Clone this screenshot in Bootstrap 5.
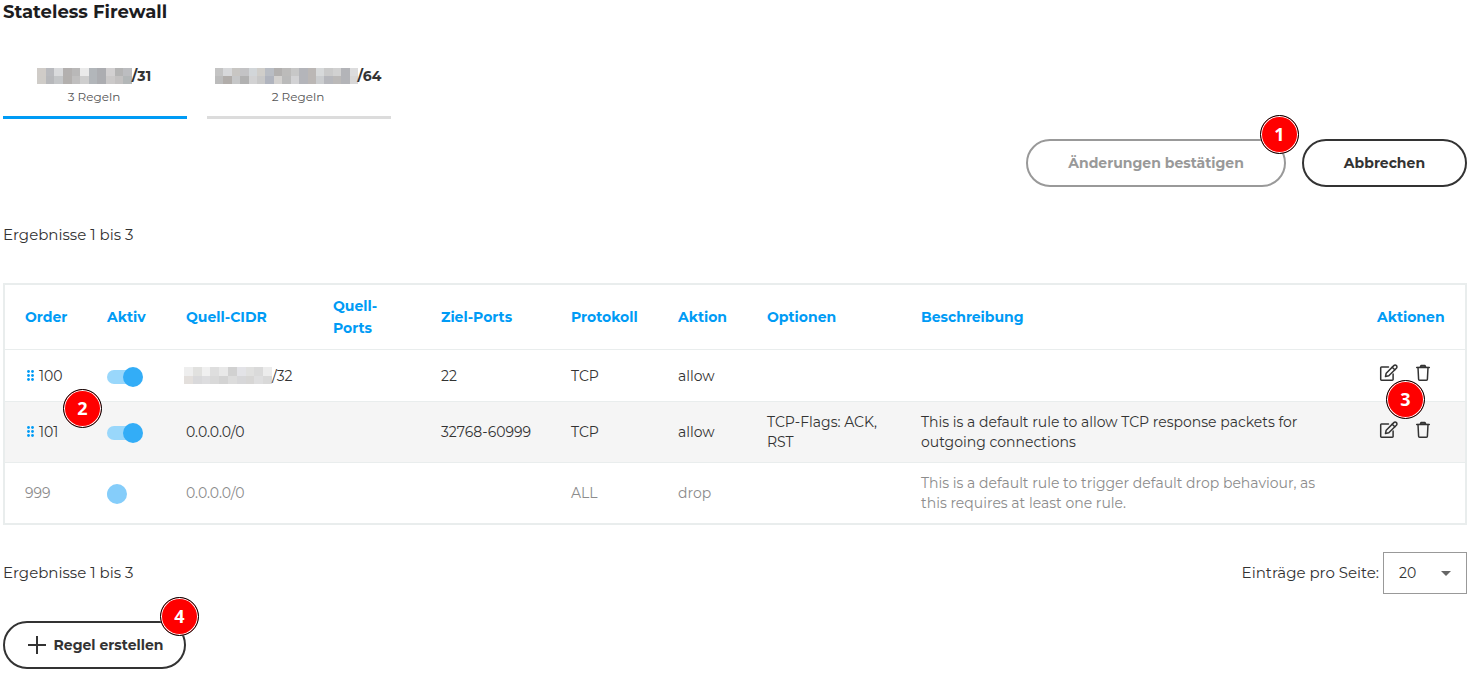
<!DOCTYPE html>
<html lang="de">
<head>
<meta charset="utf-8">
<meta name="viewport" content="width=device-width, initial-scale=1">
<title>Stateless Firewall</title>
<link href="https://cdn.jsdelivr.net/npm/bootstrap@5.3.0/dist/css/bootstrap.min.css" rel="stylesheet">
<style>
  body { font-family: Montserrat, Inter, sans-serif; font-size: 15px; line-height: 20px; color: #333; background: #fff; }
  .page { padding: 0 5px 4px 3px; }
  .page-title { font-size: 18px; line-height: 24px; font-weight: 700; color: #1d1d1f; }
  .nav-networks { gap: 20px; margin-top: 42px; }
  .nav-networks .nav-link { width: 184px; padding: 0 2px 8px 0; border: 0; border-bottom: 3px solid #dcdcdc; border-radius: 0; text-align: center; color: #333; background: none; }
  .nav-networks .nav-link.active { border-color: #009bf5; }
  .net-name { font-size: 14px; font-weight: 700; line-height: 20px; display: flex; justify-content: center; align-items: center; }
  .net-rules { font-size: 12px; line-height: 22px; display: block; color: #555; }
  .top-actions { margin-top: 20px; }
  .btn-pill { height: 48px; border: 2px solid #333; border-radius: 24px; color: #333; background: #fff; font-size: 14px; font-weight: 700; padding: 0 20px; }
  .btn-pill:disabled { border-color: #999; color: #999; background: #fff; opacity: 1; }
  .btn-confirm { width: 260px; }
  .btn-cancel { width: 165px; }
  .btn-create { width: 183px; padding: 0 0 0 2px; }
  .results { margin: 38px 0; }
  .rules { table-layout: fixed; border: 2px solid #e9eded; border-collapse: separate; border-spacing: 0; margin-bottom: 0; font-size: 14px; }
  .rules th, .rules td { padding: 10px 20px; border: 0; border-bottom: 1px solid #e9eded; vertical-align: middle; color: #333; }
  .rules th { height: 65px; line-height: 22px; font-weight: 700; color: #009bf5; }
  .rules td { height: 52px; }
  .rules tr.shaded td { background: #f5f5f5; }
  .rules tr.locked td { color: #8c8c8c; border-bottom: 0; }
  .w-order { width: 82px; } .w-active { width: 79px; } .w-cidr { width: 147px; } .w-sports { width: 108px; }
  .w-dports { width: 130px; } .w-proto { width: 107px; } .w-action { width: 89px; } .w-opts { width: 154px; } .w-tools { width: 108px; }
  .toggle { appearance: none; display: block; position: relative; width: 36px; height: 20px; margin: 2px 0 0; border: 0; background: none; }
  .toggle::before { content: ""; position: absolute; inset: 3px 2px 3px 0; border-radius: 7px; background: #99d7fb; }
  .toggle::after { content: ""; position: absolute; right: 0; top: 0; width: 20px; height: 20px; border-radius: 50%; background: #33adf7; }
  .toggle-off { width: 20px; opacity: 1; }
  .toggle-off::after { background: #85cdfa; }
  .tool { border: 0; background: none; padding: 0; color: #333; display: block; }
  .tool svg, .drag svg { display: block; }
  .tools { gap: 14px; margin: -5px 0 0 2px; }
  .redacted { margin-left: -2px; }
  .table-footer { margin-top: 27px; }
  .per-page { width: 84px; height: 42px; border: 1px solid #999; border-radius: 0; font-size: 14px; color: #333; padding: 0 15px;
    background-image: url("data:image/svg+xml,%3Csvg xmlns='http://www.w3.org/2000/svg' viewBox='0 0 10 5'%3E%3Cpath d='M0 0h10L5 5z' fill='%23666'/%3E%3C/svg%3E"); background-size: 10px 5px; background-position: right 15px center; }
  .create { margin-top: 27px; }
  .pin { position: absolute; width: 39px; height: 39px; border: 1px solid #000; border-radius: 50%; background: #f00; color: #fff;
    box-shadow: inset 0 0 0 1px #fff, 0 0 1px #fff; font: 700 18px/37px "Noto Sans", sans-serif; text-align: center; z-index: 2; pointer-events: none; }
  .pin-corner { top: -24px; right: -13px; }
  .pin-order { left: 60px; top: 106px; }
  .pin-tools { right: 42px; top: 97px; }
</style>
</head>
<body>
<main class="page">
  <h1 class="page-title mb-0">Stateless Firewall</h1>

  <div class="nav nav-networks" role="tablist">
    <button class="nav-link active" type="button" role="tab" aria-selected="true">
      <span class="net-name"><svg data-width="95" data-tiles="d0ccc8 b9babe d9dadc b3b0af b9b8b8 eaeaea b2b6ba acadb1 d2d0d1 b4b4b4 bcbdc0|cfccc8 b7b8bb c4c6c8 b3b0ae c0bfbf cecece b2b6ba acadb1 cbc9c9 c3c1c1 b3b7b8" height="16"></svg>/31</span>
      <span class="net-rules">3 Regeln</span>
    </button>
    <button class="nav-link" type="button" role="tab" aria-selected="false">
      <span class="net-name"><svg data-width="143" data-tiles="c4c4c4 d7d8da c8c6c3 c3c3c5 d2d6d9 d0ceca b9bdc4 b2b0af bcbbba c7c7c7 b4b5ba bbb7b5 d7d9da cacaca d1d1d1 b3b4b8 dcdcdd|bcbcbc b1adaa c6c7c8 b1b1b1 d2d2d3 c8c8c8 b0b4be d3d1cf bababa d2d2d4 b4b5ba bbb7b5 cbcdcf b6b7bc bbb9b8 b3b4b8 d8d7d7" height="16"></svg>/64</span>
      <span class="net-rules">2 Regeln</span>
    </button>
  </div>

  <div class="d-flex justify-content-end gap-3 top-actions">
    <div class="position-relative">
      <button class="btn btn-pill btn-confirm" type="button" disabled>Änderungen bestätigen</button>
      <span class="pin pin-corner">1</span>
    </div>
    <button class="btn btn-pill btn-cancel" type="button">Abbrechen</button>
  </div>

  <p class="results">Ergebnisse 1 bis 3</p>

  <div class="position-relative">
    <table class="table rules">
      <colgroup>
        <col class="w-order"><col class="w-active"><col class="w-cidr"><col class="w-sports"><col class="w-dports">
        <col class="w-proto"><col class="w-action"><col class="w-opts"><col><col class="w-tools">
      </colgroup>
      <thead>
        <tr><th>Order</th><th>Aktiv</th><th>Quell-CIDR</th><th>Quell-Ports</th><th>Ziel-Ports</th><th>Protokoll</th><th>Aktion</th><th>Optionen</th><th>Beschreibung</th><th>Aktionen</th></tr>
      </thead>
      <tbody>
        <tr>
          <td><span class="drag d-flex align-items-center"><svg width="14" height="12"><use href="#grip"/></svg>100</span></td>
          <td><input class="toggle" type="checkbox" role="switch" aria-label="Regel 100 aktiv" checked></td>
          <td><span class="redacted d-flex align-items-center"><svg data-width="88" data-tiles="eeeeee e1e1df f0f0f0 dedede e8e8e8 d1d1d1 e3e3e7 e0e0df dadada ececec|e3dfdc d9d9db dddddf d9d9d9 d3d3d3 dcdcdc d7d7d9 d7d6d5 dededf d9d9d9" height="17"></svg>/32</span></td>
          <td></td><td>22</td><td>TCP</td><td>allow</td><td></td><td></td>
          <td><div class="d-flex tools">
            <button class="tool" type="button" aria-label="Regel 100 bearbeiten"><svg width="20" height="20"><use href="#edit"/></svg></button>
            <button class="tool" type="button" aria-label="Regel 100 löschen"><svg width="20" height="20"><use href="#trash"/></svg></button>
          </div></td>
        </tr>
        <tr class="shaded">
          <td><span class="drag d-flex align-items-center"><svg width="14" height="12"><use href="#grip"/></svg>101</span></td>
          <td><input class="toggle" type="checkbox" role="switch" aria-label="Regel 101 aktiv" checked></td>
          <td>0.0.0.0/0</td><td></td><td>32768-60999</td><td>TCP</td><td>allow</td><td>TCP-Flags: ACK, RST</td>
          <td>This is a default rule to allow TCP response packets for outgoing connections</td>
          <td><div class="d-flex tools">
            <button class="tool" type="button" aria-label="Regel 101 bearbeiten"><svg width="20" height="20"><use href="#edit"/></svg></button>
            <button class="tool" type="button" aria-label="Regel 101 löschen"><svg width="20" height="20"><use href="#trash"/></svg></button>
          </div></td>
        </tr>
        <tr class="locked">
          <td>999</td>
          <td><input class="toggle toggle-off" type="checkbox" role="switch" aria-label="Regel 999 aktiv" disabled></td>
          <td>0.0.0.0/0</td><td></td><td></td><td>ALL</td><td>drop</td><td></td>
          <td>This is a default rule to trigger default drop behaviour, as this requires at least one rule.</td><td></td>
        </tr>
      </tbody>
    </table>
    <span class="pin pin-order">2</span>
    <span class="pin pin-tools">3</span>
  </div>

  <div class="d-flex justify-content-between align-items-center table-footer">
    <span>Ergebnisse 1 bis 3</span>
    <div class="d-flex align-items-center gap-1">
      <label for="perPage">Einträge pro Seite:</label>
      <select id="perPage" class="form-select per-page"><option>20</option><option>50</option><option>100</option></select>
    </div>
  </div>

  <div class="d-flex create">
    <div class="position-relative">
      <button class="btn btn-pill btn-create d-flex align-items-center justify-content-center gap-2" type="button">
        <svg width="18" height="18" viewBox="0 0 18 18" stroke="currentColor" stroke-width="2"><path d="M9 0v18M0 9h18"/></svg>Regel erstellen
      </button>
      <span class="pin pin-corner">4</span>
    </div>
  </div>
</main>

<svg width="0" height="0" class="position-absolute" aria-hidden="true">
  <symbol id="grip" viewBox="0 0 14 12"><g fill="#009bf5">
    <circle cx="3.5" cy="1.5" r="1.4"/><circle cx="7.5" cy="1.5" r="1.4"/>
    <circle cx="3.5" cy="5.5" r="1.4"/><circle cx="7.5" cy="5.5" r="1.4"/>
    <circle cx="3.5" cy="9.5" r="1.4"/><circle cx="7.5" cy="9.5" r="1.4"/></g></symbol>
  <symbol id="edit" viewBox="0 0 20 20"><g fill="none" stroke="currentColor" stroke-width="1.5" stroke-linejoin="round" stroke-linecap="round">
    <path d="M9.500 4H2.500a.8.8 0 0 0-.8.8v11.700a.8.8 0 0 0 .8.8h10.800a.8.8 0 0 0 .8-.8v-5.500"/>
    <path d="M6.500 13.500l.7-3.300 7.600-7.600a1.800 1.800 0 0 1 2.600 2.600l-7.600 7.600z"/><path d="M13.200 4.200l2.600 2.600"/></g></symbol>
  <symbol id="trash" viewBox="0 0 20 20"><g fill="none" stroke="currentColor" stroke-width="1.5" stroke-linejoin="round" stroke-linecap="round">
    <path d="M3.700 4.500h12.600"/><path d="M5 4.500l.6 11.800a1 1 0 0 0 1 1h6.800a1 1 0 0 0 1-1l.6-11.800"/><path d="M7.200 4.300l.8-1.800h4l.8 1.800z" fill="#888"/></g></symbol>
</svg>

<script src="https://cdn.jsdelivr.net/npm/bootstrap@5.3.0/dist/js/bootstrap.bundle.min.js"></script>
<script>
  // Fill each redacted address with its two rows of coloured tiles.
  document.querySelectorAll('svg[data-tiles]').forEach(function (svg) {
    var width = +svg.dataset.width, height = +svg.getAttribute('height');
    svg.setAttribute('width', width);
    svg.setAttribute('shape-rendering', 'crispEdges');
    svg.style.flex = 'none';
    svg.innerHTML = svg.dataset.tiles.split('|').map(function (row, r) {
      var tiles = row.split(' '), w = width / tiles.length;
      return tiles.map(function (c, i) {
        return '<rect x="' + i * w + '" y="' + r * height / 2 + '" width="' + w + '" height="' + height / 2 + '" fill="#' + c + '"/>';
      }).join('');
    }).join('');
  });
</script>
</body>
</html>
